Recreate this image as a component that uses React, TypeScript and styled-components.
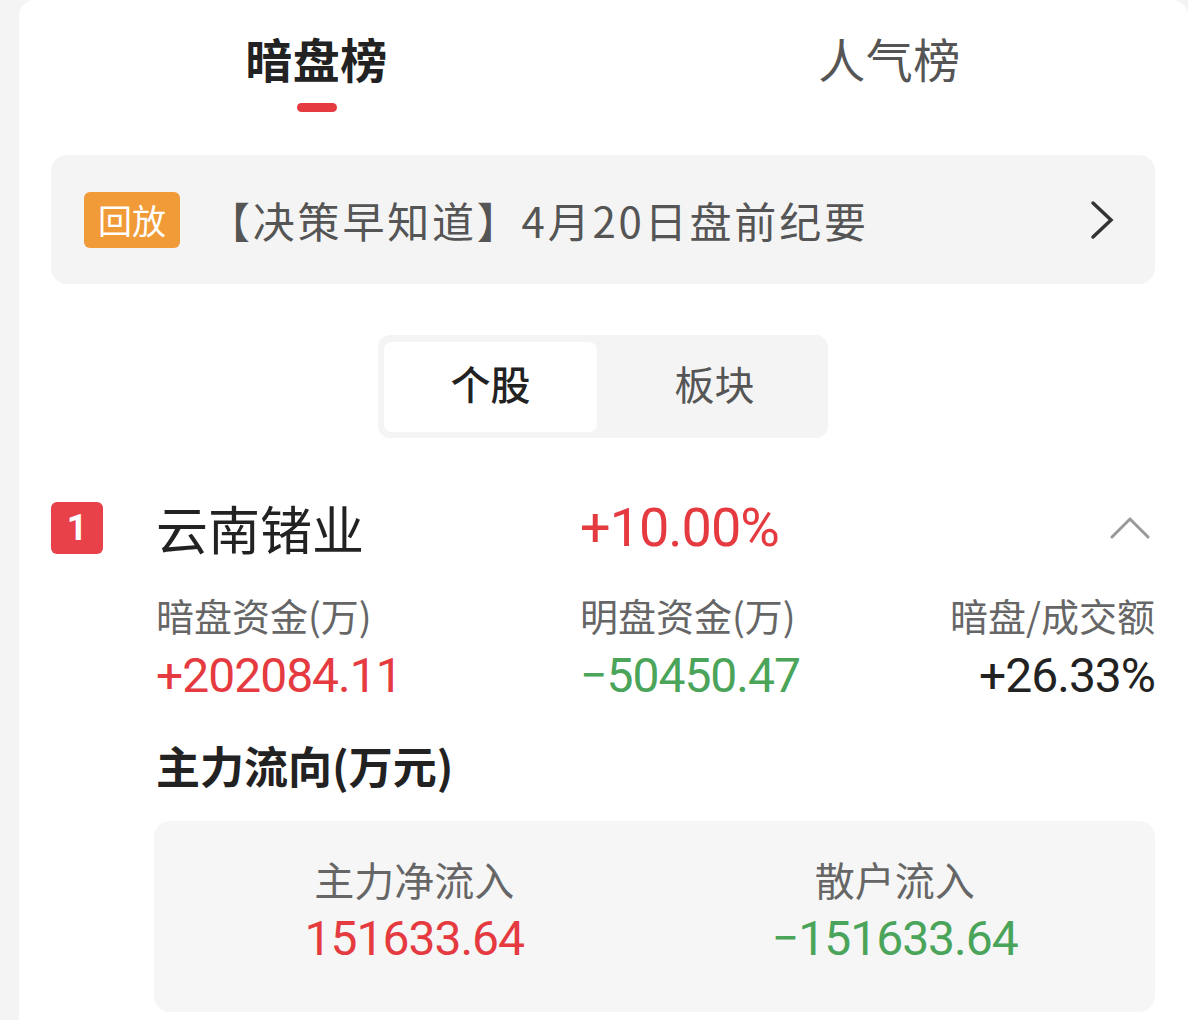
import styled, { createGlobalStyle } from 'styled-components';

const GlobalStyle = createGlobalStyle`
  * { box-sizing: border-box; }
  html, body {
    margin: 0;
    padding: 0;
    background: #f4f4f4;
  }
  body {
    font-family: "Noto Sans CJK SC", "Noto Sans", sans-serif;
    color: #222;
  }
`;

const RED = '#e53a40';
const GREEN = '#4aa45a';

const Card = styled.div`
  margin-left: 19px;
  min-height: 1020px;
  background: #fff;
  border-radius: 16px 16px 0 0;
  padding: 0 33px 0 32px;
`;

const TabBar = styled.div`
  display: flex;
  margin-left: -21px;
`;

const Tab = styled.div`
  flex: 0 0 573px;
  display: flex;
  flex-direction: column;
  align-items: center;
  padding-top: 34px;
`;

const TabLabel = styled.span<{ $active?: boolean }>`
  font-size: 47px;
  line-height: 47px;
  letter-spacing: 0.5px;
  font-weight: ${(p) => (p.$active ? 700 : 400)};
  color: ${(p) => (p.$active ? '#222' : '#555')};
`;

const TabMark = styled.span<{ $show?: boolean }>`
  margin-top: 22px;
  width: 40px;
  height: 9px;
  border-radius: 5px;
  background: ${(p) => (p.$show ? RED : 'transparent')};
`;

const Banner = styled.div`
  margin-top: 43px;
  height: 129px;
  border-radius: 16px;
  background: #f4f4f4;
  display: flex;
  align-items: center;
  padding: 0 40px 0 33px;
`;

const ReplayTag = styled.span`
  width: 96px;
  height: 56px;
  border-radius: 6px;
  background: #f09a38;
  color: #fff;
  font-size: 34px;
  display: flex;
  align-items: center;
  justify-content: center;
`;

const BannerText = styled.span`
  flex: 1;
  margin-left: 28px;
  font-size: 42px;
  color: #555;
  letter-spacing: 2.8px;
`;

const Segment = styled.div`
  margin: 51px auto 0;
  width: 450px;
  height: 103px;
  padding: 7px 6px 6px;
  border-radius: 12px;
  background: #f4f4f4;
  display: grid;
  grid-template-columns: 213px 1fr;
`;

const SegmentItem = styled.div<{ $active?: boolean }>`
  border-radius: 8px;
  background: ${(p) => (p.$active ? '#fff' : 'transparent')};
  display: flex;
  align-items: center;
  justify-content: center;
  padding-bottom: 8px;
  padding-left: ${(p) => (p.$active ? 0 : 10)}px;
  font-size: 40px;
  font-weight: ${(p) => (p.$active ? 500 : 400)};
  color: ${(p) => (p.$active ? '#222' : '#555')};
`;

const StockItem = styled.div`
  margin-top: 62px;
  display: grid;
  grid-template-columns: 105px 424px 1fr auto;
  align-items: center;
`;

const RankBadge = styled.span`
  width: 52px;
  height: 52px;
  border-radius: 6px;
  background: #e8414a;
  color: #fff;
  font-family: Roboto, sans-serif;
  font-weight: 700;
  font-size: 36px;
  display: flex;
  align-items: center;
  justify-content: center;
`;

const StockName = styled.span`
  font-size: 52px;
  line-height: 52px;
  color: #222;
`;

const Num = styled.span<{ $color?: string; $size?: number }>`
  font-family: Roboto, "Noto Sans", sans-serif;
  font-size: ${(p) => p.$size ?? 48}px;
  line-height: 56px;
  letter-spacing: -1px;
  color: ${(p) => p.$color ?? '#222'};
`;

const Toggle = styled.span`
  justify-self: end;
  margin-right: 5px;
  display: flex;
`;

const Stat = styled.div<{ $end?: boolean }>`
  margin-top: 36px;
  display: flex;
  flex-direction: column;
  align-items: ${(p) => (p.$end ? 'flex-end' : 'flex-start')};
  justify-self: ${(p) => (p.$end ? 'end' : 'start')};
`;

const StatLabel = styled.span`
  font-size: 38px;
  line-height: 46px;
  color: #666;
  margin-bottom: 10px;
`;

const SectionTitle = styled.div`
  grid-column: 2 / -1;
  margin-top: 35px;
  font-size: 44px;
  line-height: 52px;
  font-weight: 700;
  color: #222;
`;

const FlowBox = styled.div`
  grid-column: 2 / -1;
  margin-top: 30px;
  margin-left: -2px;
  height: 191px;
  border-radius: 16px;
  background: #f6f6f6;
  padding: 34px 20px 0;
  display: grid;
  grid-template-columns: 1fr 1fr;
`;

const FlowCell = styled.div`
  display: flex;
  flex-direction: column;
  align-items: center;
`;

const FlowLabel = styled.span`
  font-size: 40px;
  line-height: 48px;
  color: #666;
  margin-bottom: 8px;
`;

const ChevronRight = () => (
  <svg width="26" height="40" viewBox="0 0 26 40" fill="none">
    <polyline points="4,3 22,20 4,37" stroke="#333" strokeWidth="3.5" strokeLinecap="round" strokeLinejoin="miter" />
  </svg>
);

const ChevronUp = () => (
  <svg width="40" height="24" viewBox="0 0 40 24" fill="none">
    <polyline points="2,21 20,3 38,21" stroke="#999" strokeWidth="3" strokeLinecap="round" />
  </svg>
);

export default function App() {
  return (
    <>
      <GlobalStyle />
      <Card>
        <TabBar>
          <Tab>
            <TabLabel $active>暗盘榜</TabLabel>
            <TabMark $show />
          </Tab>
          <Tab>
            <TabLabel>人气榜</TabLabel>
            <TabMark />
          </Tab>
        </TabBar>

        <Banner>
          <ReplayTag>回放</ReplayTag>
          <BannerText>【决策早知道】4月20日盘前纪要</BannerText>
          <ChevronRight />
        </Banner>

        <Segment>
          <SegmentItem $active>个股</SegmentItem>
          <SegmentItem>板块</SegmentItem>
        </Segment>

        <StockItem>
          <RankBadge>1</RankBadge>
          <StockName>云南锗业</StockName>
          <Num $color={RED} $size={54}>+10.00%</Num>
          <Toggle>
            <ChevronUp />
          </Toggle>

          <span />
          <Stat>
            <StatLabel>暗盘资金(万)</StatLabel>
            <Num $color={RED}>+202084.11</Num>
          </Stat>
          <Stat>
            <StatLabel>明盘资金(万)</StatLabel>
            <Num $color={GREEN}>−50450.47</Num>
          </Stat>
          <Stat $end>
            <StatLabel>暗盘/成交额</StatLabel>
            <Num>+26.33%</Num>
          </Stat>

          <SectionTitle>主力流向(万元)</SectionTitle>

          <FlowBox>
            <FlowCell>
              <FlowLabel>主力净流入</FlowLabel>
              <Num $color={RED}>151633.64</Num>
            </FlowCell>
            <FlowCell>
              <FlowLabel>散户流入</FlowLabel>
              <Num $color={GREEN}>−151633.64</Num>
            </FlowCell>
          </FlowBox>
        </StockItem>
      </Card>
    </>
  );
}
